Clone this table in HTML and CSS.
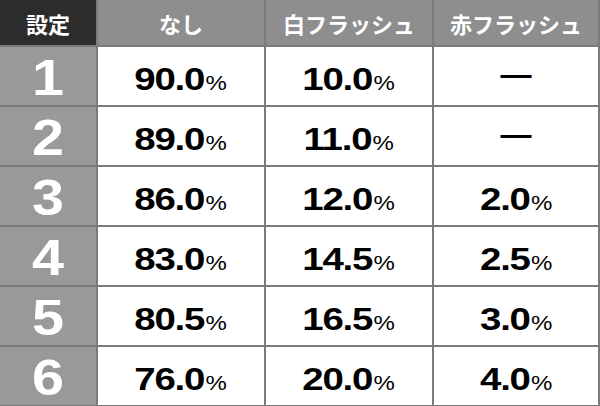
FILE: index.html
```html
<!DOCTYPE html>
<html lang="ja">
<head>
<meta charset="utf-8">
<link rel="stylesheet" href="styles.css">
</head>
<body>
<div class="table">
  <div class="cell head head-dark">設定</div>
  <div class="cell head">なし</div>
  <div class="cell head">白フラッシュ</div>
  <div class="cell head">赤フラッシュ</div>

  <div class="cell set"><span class="sx">1</span></div>
  <div class="cell"><span class="sx">90.0<small>%</small></span></div>
  <div class="cell"><span class="sx">10.0<small>%</small></span></div>
  <div class="cell"><span class="dash">―</span></div>

  <div class="cell set"><span class="sx">2</span></div>
  <div class="cell"><span class="sx">89.0<small>%</small></span></div>
  <div class="cell"><span class="sx">11.0<small>%</small></span></div>
  <div class="cell"><span class="dash">―</span></div>

  <div class="cell set"><span class="sx">3</span></div>
  <div class="cell"><span class="sx">86.0<small>%</small></span></div>
  <div class="cell"><span class="sx">12.0<small>%</small></span></div>
  <div class="cell"><span class="sx">2.0<small>%</small></span></div>

  <div class="cell set"><span class="sx">4</span></div>
  <div class="cell"><span class="sx">83.0<small>%</small></span></div>
  <div class="cell"><span class="sx">14.5<small>%</small></span></div>
  <div class="cell"><span class="sx">2.5<small>%</small></span></div>

  <div class="cell set"><span class="sx">5</span></div>
  <div class="cell"><span class="sx">80.5<small>%</small></span></div>
  <div class="cell"><span class="sx">16.5<small>%</small></span></div>
  <div class="cell"><span class="sx">3.0<small>%</small></span></div>

  <div class="cell set"><span class="sx">6</span></div>
  <div class="cell"><span class="sx">76.0<small>%</small></span></div>
  <div class="cell"><span class="sx">20.0<small>%</small></span></div>
  <div class="cell"><span class="sx">4.0<small>%</small></span></div>
</div>
</body>
</html>
```
FILE: styles.css
```css
html, body {
  margin: 0;
  padding: 0;
  background: #ffffff;
}
.table {
  width: 600px;
  height: 406px;
  box-sizing: border-box;
  padding: 0 2px 1px 0;
  background: #7a7a7a;
  display: grid;
  grid-template-columns: 96px 166px 166px 164px;
  grid-template-rows: 45px repeat(6, 58px);
  gap: 2px;
  font-family: "Liberation Sans", Arial, sans-serif;
}
.cell {
  background: #ffffff;
  display: flex;
  align-items: center;
  justify-content: center;
  color: #000000;
  overflow: hidden;
}
.head {
  background: #8e8e8e;
  color: #ffffff;
  font-family: "Noto Sans CJK JP", sans-serif;
  font-weight: 700;
  font-size: 22px;
}
.head-dark {
  background: #2c2c2c;
}
.set {
  background: #999999;
  color: #ffffff;
}
.sx {
  display: inline-block;
  transform: scaleX(1.2);
  font-weight: 700;
  font-size: 32px;
  letter-spacing: -1px;
  line-height: 1;
  padding-top: 6px;
}
.set .sx {
  font-size: 50px;
  letter-spacing: 0;
  transform: scaleX(1.15);
  padding-top: 3px;
}
.sx small {
  font-size: 20px;
  font-weight: 400;
  letter-spacing: 0;
  margin-left: 1px;
}
.dash {
  font-weight: 700;
  font-size: 31px;
  line-height: 1;
  padding-bottom: 3px;
}
```
